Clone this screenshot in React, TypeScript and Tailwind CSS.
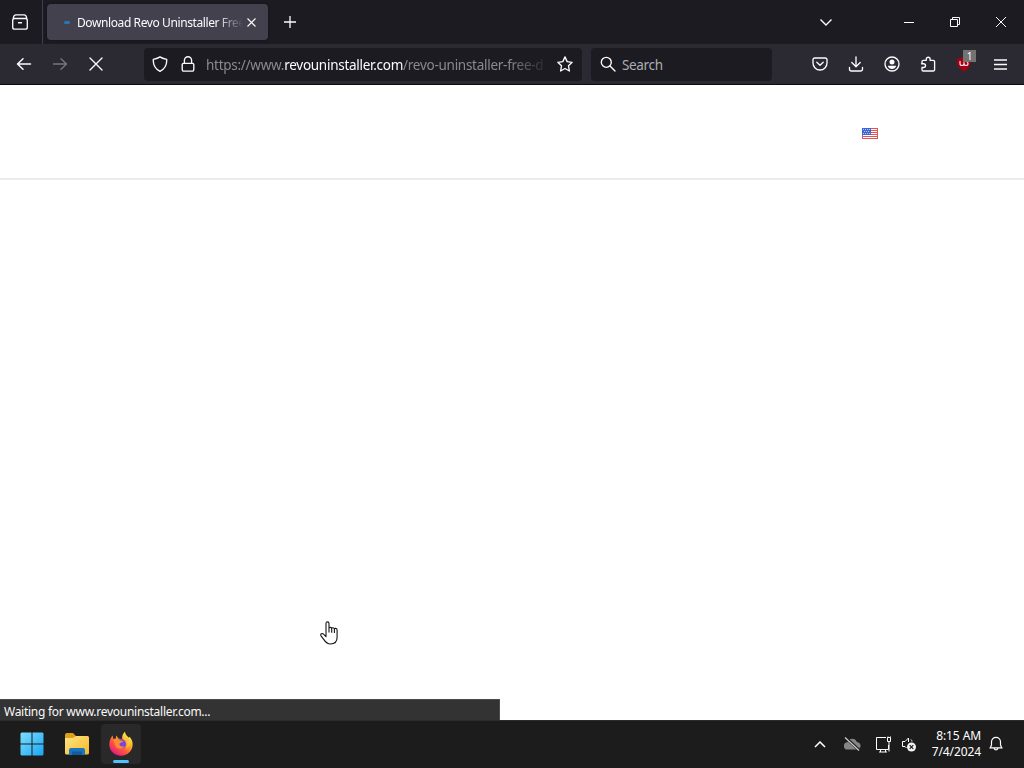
// firefox window on a windows 11 desktop, page still loading

import type { ReactNode } from "react";

type IconProps = {
  children: ReactNode;
  className?: string;
  size?: number;
};

// 16x16 line icon, same grid as the browser chrome
const Icon = ({ children, className = "", size = 16 }: IconProps) => (
  <svg
    width={size}
    height={size}
    viewBox="0 0 16 16"
    fill="none"
    stroke="currentColor"
    strokeWidth="1.35"
    strokeLinecap="round"
    strokeLinejoin="round"
    className={`shrink-0 ${className}`}
  >
    {children}
  </svg>
);

const ToolButton = ({ children }: { children: ReactNode }) => (
  <button className="relative flex h-8 w-9 shrink-0 items-center justify-center">
    {children}
  </button>
);

const TabStrip = () => (
  <div className="flex h-11 shrink-0 bg-[#1c1b22] text-[#fbfbfe]">
    <button className="flex h-11 w-[43px] items-center border-r border-[#3f3e4b] pl-3">
      <Icon>
        <path d="M4 .9h8M2.6 4.5h10.800a1.900 1.900 0 0 1 1.900 1.900v6.800a1.900 1.900 0 0 1-1.900 1.900H2.600a1.900 1.900 0 0 1-1.900-1.900V6.400a1.900 1.900 0 0 1 1.900-1.900zM1.200 4.800C1.500 2.500 2.300 .9 4 .9M14.800 4.800C14.500 2.500 13.700 .9 12 .9M6.500 8.700h3" />
      </Icon>
    </button>
    <div className="ml-1 mt-1 flex h-9 w-[221px] items-center rounded bg-[#42414d] shadow-[0_0_3px_rgba(0,0,0,0.4)]">
      <span className="ml-[17px] h-[3px] w-[6px] rounded-full bg-[#2676b8]" />
      <span className="ml-[7px] w-[166px] whitespace-nowrap pt-px text-[12px] tracking-[-0.4px] [mask-image:linear-gradient(to_right,#000_84%,transparent)]">
        Download Revo Uninstaller Free
      </span>
      <svg width="9" height="9" viewBox="0 0 9 9" stroke="currentColor" strokeWidth="1.1" className="ml-1 shrink-0">
        <path d="m.5.5 8 8m0-8-8 8" />
      </svg>
    </div>
    <button className="ml-4 flex items-center">
      <svg width="12" height="12" viewBox="0 0 12 12" stroke="currentColor" strokeWidth="1.3">
        <path d="M6 0v12M0 6h12" />
      </svg>
    </button>
    <div className="ml-auto flex">
      <button className="mr-[42px] flex w-9 items-center justify-center">
        <svg width="12" height="7" viewBox="0 0 12 7" fill="none" stroke="currentColor" strokeWidth="1.4">
          <path d="m.5.5 5.5 5.5L11.5.5" />
        </svg>
      </button>
      <button className="flex w-[46px] items-center justify-center">
        <span className="h-px w-[10px] bg-white" />
      </button>
      <button className="flex w-[46px] items-center justify-center">
        <svg width="10" height="10" viewBox="0 0 10 10" fill="none" stroke="currentColor">
          <path d="M.5 2.500h7v7h-7zM2.500 2.500v-2h7v7h-2" />
        </svg>
      </button>
      <button className="flex w-[46px] items-center justify-center">
        <svg width="10" height="10" viewBox="0 0 10 10" stroke="currentColor">
          <path d="m0 0 10 10m0-10-10 10" />
        </svg>
      </button>
    </div>
  </div>
);

const Toolbar = () => (
  <div className="flex h-[41px] shrink-0 items-center border-b border-[#0c0c0d] bg-[#2b2a33] pl-[6px] text-[#fbfbfe]">
    <ToolButton>
      <Icon>
        <path strokeWidth="1.5" d="M14.500 8h-13M7 2.800 1.500 8 7 13.200" />
      </Icon>
    </ToolButton>
    <ToolButton>
      <Icon className="text-[#77767e]">
        <path d="M1.500 8h13M9 2.800 14.500 8 9 13.200" />
      </Icon>
    </ToolButton>
    <ToolButton>
      <Icon>
        <path d="m2 2 12 12M14 2 2 14" />
      </Icon>
    </ToolButton>

    <div className="ml-[30px] flex h-[33px] w-[438px] items-center rounded bg-[#1c1b22] pl-2">
      <Icon>
        <path d="M8 .9c2 1.600 4.200 2 6.700 2.400.4 5.800-2 9.600-6.700 12-4.700-2.400-7.100-6.200-6.700-12C3.800 2.900 6 2.500 8 .9z" />
      </Icon>
      <Icon className="ml-3">
        <path d="M3.500 7.300h9a1.300 1.300 0 0 1 1.300 1.300v5a1.500 1.500 0 0 1-1.500 1.500H3.700a1.500 1.500 0 0 1-1.500-1.500v-5a1.300 1.300 0 0 1 1.300-1.300zM4.400 7.200V4.300a3.600 3.600 0 0 1 7.200 0v2.900" />
      </Icon>
      <div className="ml-[10px] w-[344px] whitespace-nowrap pt-[2px] text-[13.5px] leading-5 tracking-[-0.27px] text-[#8a8990] [mask-image:linear-gradient(to_right,#000_88%,transparent)]">
        https://www.<span className="text-[#fbfbfe]">revouninstaller.com</span>/revo-uninstaller-free-d
      </div>
      <Icon className="ml-[7px]">
        <path d="m8 .9 2.150 4.700 5 .7-3.650 3.500.9 5.200L8 12.500 3.600 15l.9-5.200L.85 6.300l5-.7z" />
      </Icon>
    </div>

    <div className="ml-[9px] flex h-[33px] w-[181px] items-center rounded bg-[#1c1b22] pl-[9px]">
      <Icon>
        <circle cx="6.300" cy="6.300" r="5" />
        <path d="m10 10 5 5" />
      </Icon>
      <span className="ml-[6px] pt-[2px] text-[13.5px] leading-5 tracking-[-0.35px] text-[#adadb3]">Search</span>
    </div>

    <div className="ml-auto mr-[6px] flex">
      <ToolButton>
        <Icon>
          <path d="M2.700 2h10.600a1.700 1.700 0 0 1 1.700 1.700V7A7 7 0 0 1 1 7V3.700A1.700 1.700 0 0 1 2.700 2zM4.800 6.200 8 9.300l3.200-3.100" />
        </Icon>
      </ToolButton>
      <ToolButton>
        <Icon>
          <path d="M8 .8v9.700M3.800 6.500 8 10.700l4.200-4.200M1.500 11.500v1.800a1.700 1.700 0 0 0 1.700 1.700h9.600a1.700 1.700 0 0 0 1.700-1.700v-1.800" />
        </Icon>
      </ToolButton>
      <ToolButton>
        <Icon>
          <circle cx="8" cy="8" r="7" />
          <circle cx="8" cy="6" r="2.500" fill="currentColor" stroke="none" />
          <path d="M3.800 9.700h8.400C11.700 11.900 10 13 8 13s-3.700-1.100-4.200-3.300z" fill="currentColor" stroke="none" />
        </Icon>
      </ToolButton>
      <ToolButton>
        <Icon>
          <path d="M2 7V5.600a1.300 1.300 0 0 1 1.300-1.300h3V3.100a1.900 1.900 0 0 1 3.800 0v1.200h3.200a1.300 1.300 0 0 1 1.300 1.300v8.100a1.300 1.300 0 0 1-1.300 1.300h-10A1.300 1.300 0 0 1 2 13.700v-2.200h1.600a1.800 1.800 0 0 0 0-3.800H1.500" />
        </Icon>
      </ToolButton>
      <ToolButton>
        <svg width="16" height="16" viewBox="0 0 16 16" fill="none">
          <path d="M8 0c2 1.800 4.500 2.300 7 2.500.3 6.500-2 10.500-7 13-5-2.500-7.300-6.500-7-13C3.500 2.300 6 1.800 8 0z" fill="#a30012" />
          <path d="M4 5v2.500q0 2 2 2t2-2V6.300v1.200q0 2 2 2t2-2q0-2-2-2.300" stroke="#f4dfe2" strokeWidth="1.200" />
        </svg>
        <span className="absolute left-[17px] top-[2px] flex h-[12px] w-[13px] items-center justify-center bg-[#737373] text-[10px] leading-none text-white">
          1
        </span>
      </ToolButton>
      <ToolButton>
        <svg width="13" height="11" viewBox="0 0 13 11" stroke="currentColor" strokeWidth="1.300">
          <path d="M0 1h13M0 5.500h13M0 10h13" />
        </svg>
      </ToolButton>
    </div>
  </div>
);

const UsFlag = () => (
  <svg width="16" height="11" viewBox="0 0 16 11" shapeRendering="crispEdges">
    <path fill="#fff" d="M0 0h16v11H0z" />
    <path fill="#e5534f" d="M0 0h16v1H0zM8 2h8v1H8zM8 4h8v1H8zM8 6h8v1H8zM0 8h16v1H0zM0 10h16v1H0zM15 0h1v11h-1z" />
    <path fill="#3c65d5" d="M0 0h9v7H0z" />
    <path
      fill="#b9cafa"
      d="M1 1h1v1H1zM3 1h1v1H3zM5 1h1v1H5zM7 1h1v1H7zM2 3h1v1H2zM4 3h1v1H4zM6 3h1v1H6zM1 5h1v1H1zM3 5h1v1H3zM5 5h1v1H5zM7 5h1v1H7z"
    />
    <path fill="#a66a80" d="M0 7h1v4H0z" />
  </svg>
);

const Page = () => (
  <div className="relative flex min-h-0 flex-1 flex-col bg-white">
    <header className="flex h-[95px] items-center justify-end border-b-2 border-[#ebebef] pr-[146px] pt-[3px]">
      <UsFlag />
    </header>
    {/* mouse pointer */}
    <svg width="19" height="25" viewBox="0 0 19 25" className="absolute left-[320px] top-[536px]">
      <path
        d="M6 14V2.400C6 .3 9 .3 9 2.400V7.500c0-1.500 2.700-1.500 2.700.3 0-1.500 2.700-1.300 2.700.5 0-1.400 2.700-1.200 2.700.7v7.300c0 4-2.400 6.700-6.600 6.700-3.500 0-5-1.900-6.600-4.400L1 14.800c-1-1.800 1-3 2.500-1.600L6 15.700zM9 7.500v4M11.700 8v3.800M14.400 8.500v3.500"
        fill="#fff"
        stroke="#151515"
        strokeWidth="1.100"
        strokeLinejoin="round"
      />
    </svg>
    {/* link status */}
    <div className="absolute bottom-0 left-0 flex h-[21px] w-[500px] items-center border-r border-t border-[#4a4a4a] bg-[#333333] pl-1 pt-[3px] text-[12px] tracking-[-0.27px] text-[#f9f9fa]">
      Waiting for www.revouninstaller.com...
    </div>
  </div>
);

const StartLogo = () => (
  <svg width="24" height="24" viewBox="0 0 24 24">
    <defs>
      <linearGradient id="start" x1="0" y1="0" x2="1" y2="1">
        <stop stopColor="#7bdfff" />
        <stop offset="1" stopColor="#1ba5f2" />
      </linearGradient>
    </defs>
    <path fill="url(#start)" d="M1.500.5h10v11H.5v-10zM12.500.5h10l1 1v10h-11zM.5 12.500h11v11h-10l-1-1zM12.500 12.500h11v10l-1 1h-10z" />
  </svg>
);

const FolderLogo = () => (
  <svg width="26" height="24" viewBox="0 0 26 24">
    <defs>
      <linearGradient id="folder" x1="0" y1="0" x2="1" y2="1">
        <stop stopColor="#ffe487" />
        <stop offset="1" stopColor="#f5b927" />
      </linearGradient>
    </defs>
    <path fill="#dda116" d="M1 3q0-2 2-2h6l3 3h11q2 0 2 2v8H1z" />
    <path fill="url(#folder)" d="M1 6h8l3-2h11q2 0 2 2v15q0 1.500-1.500 1.500h-21Q1 22.500 1 21z" />
    <path fill="#1976bd" d="M5 23v-5q0-2 2-2h12q2 0 2 2v5z" />
    <path fill="#135b9b" d="M8 19.500h10V23H8z" />
  </svg>
);

const FirefoxLogo = () => (
  <svg width="26" height="26" viewBox="0 0 26 26">
    <defs>
      <linearGradient id="fox" x1=".85" y1=".1" x2=".2" y2=".95">
        <stop stopColor="#fff44f" />
        <stop offset=".3" stopColor="#ffb52e" />
        <stop offset=".62" stopColor="#ff5a37" />
        <stop offset="1" stopColor="#e31587" />
      </linearGradient>
    </defs>
    <path
      fill="url(#fox)"
      d="M4.500 4.500 5.500 8l2.300-.5.400-3 2.500 3.300 3.500.2c-.3-3 .5-5.500 2.800-7.300.3 3 2.200 4.300 3.900 6.100l.7-1c2.300 2.500 3.200 5.100 3 8.200-.3 6-5 10.700-11.500 10.700S1.500 20 1.300 14C1.200 10 2.500 7 4.500 4.500z"
    />
    <circle cx="13" cy="13" r="5" fill="#7845d8" />
    <path fill="#ff8a32" d="M5.500 8.500c3-1.300 5-.7 6.800 1l3.200.4c-.8 1.700-3.700 1.400-4.100 3.200 0 2.600 2.800 3 4.900 1.800-1.500 4.300-8.200 3.500-9.300-1z" />
    <path fill="#ffc83b" d="M16 7c4 2.500 4.500 7 2 10.500 5-2 5-9 .5-11.500z" />
  </svg>
);

const Taskbar = () => (
  <div className="flex h-12 shrink-0 items-center border-t border-[#2b2b2b] bg-[#1c1c1c] pb-px text-white">
    <button className="ml-5">
      <StartLogo />
    </button>
    <button className="ml-5">
      <FolderLogo />
    </button>
    <button className="ml-[11px] flex h-10 w-10 flex-col items-center rounded bg-[#292929] pt-[7px]">
      <FirefoxLogo />
      <span className="mt-[3px] h-[3px] w-4 shrink-0 rounded-full bg-[#4cc2ff]" />
    </button>

    <div className="ml-auto flex items-center pr-[21px]">
      <svg width="12" height="7" viewBox="0 0 12 7" fill="none" stroke="currentColor" strokeWidth="1.500">
        <path d="m1 6 5-5 5 5" />
      </svg>
      <svg width="18" height="16" viewBox="0 0 18 16" className="ml-[17px]">
        <path fill="#858585" d="M4.500 13.500a3.600 3.600 0 0 1 0-7.200c1-4.500 8-4.800 9.300-.3 5 .2 5 7.500 0 7.500z" />
        <path stroke="#1c1c1c" strokeWidth="3" d="m2 1 14 13" />
        <path stroke="#d0d0d0" strokeWidth="1.200" d="m2 1.500 14 13" />
      </svg>
      <svg width="17" height="17" viewBox="0 0 17 17" fill="none" stroke="currentColor" className="ml-[14px]">
        <path d="M11 1.500H1.500v12h12V9M4 16h8M5.500 13.500V16M10.500 13.500V16M12.500 1.500h3v4h-3zM14 5.500v10M13 .5v1M15.500 .5v1" />
      </svg>
      <svg width="16" height="16" viewBox="0 0 16 16" fill="none" stroke="currentColor" className="ml-[9px]">
        <path d="M5.500 12 4 10.500H1.500v-5H4l3.500-3.500V6M10 3.500q1 1 1 2" />
        <circle cx="10.500" cy="11" r="4.500" fill="#f4f4f4" stroke="none" />
        <path d="m8.700 9.200 3.600 3.600m0-3.600-3.600 3.600" stroke="#1c1c1c" strokeWidth="1.200" />
      </svg>
      <div className="ml-3 flex w-[52px] flex-col items-end whitespace-nowrap text-[12px] leading-4 tracking-[-0.1px]">
        <div>8:15 AM</div>
        <div>7/4/2024</div>
      </div>
      <svg width="14" height="16" viewBox="0 0 14 16" fill="none" stroke="currentColor" strokeWidth="1.200" className="ml-[8px]">
        <path d="M2.500 9V5.800a4.500 4.500 0 0 1 9 0V9l1.300 2.800H1.200zM5 12c.3 2.500 3.700 2.500 4 0" />
      </svg>
    </div>
  </div>
);

export default function App() {
  return (
    <div className="flex h-[768px] w-[1024px] flex-col overflow-hidden font-['Noto_Sans','Open_Sans',sans-serif]">
      <TabStrip />
      <Toolbar />
      <Page />
      <Taskbar />
    </div>
  );
}
